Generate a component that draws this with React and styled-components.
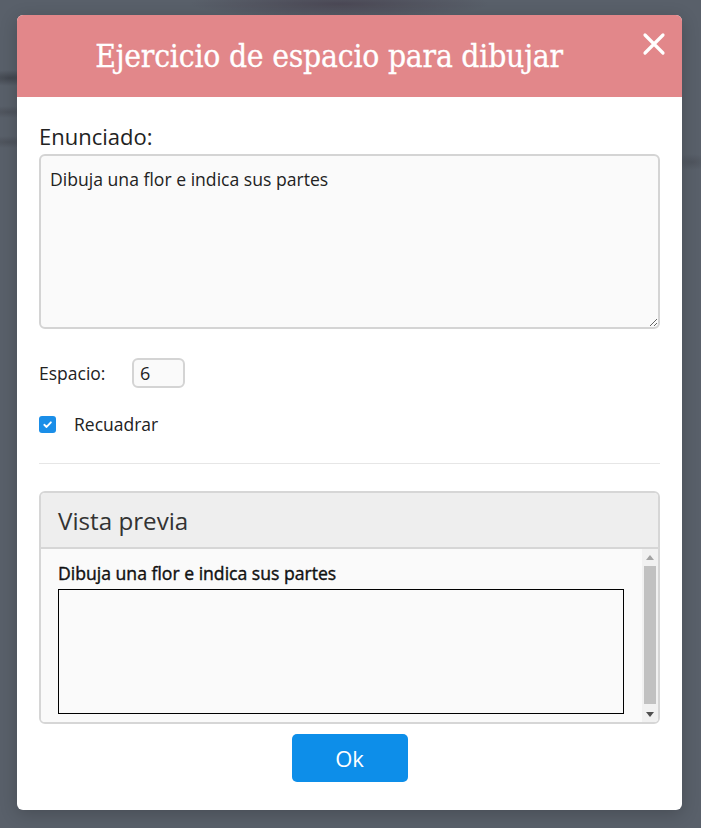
import React, { useState } from "react";
import styled, { createGlobalStyle } from "styled-components";

const GlobalStyle = createGlobalStyle`
  html, body {
    margin: 0;
    padding: 0;
  }
  body {
    font-family: "Open Sans", "Liberation Sans", sans-serif;
    background-color: #59606a;
    background-image:
      radial-gradient(ellipse 150px 14px at 340px 4px, rgba(70, 64, 78, 0.75), transparent),
      radial-gradient(ellipse 30px 8px at 10px 78px, rgba(60, 64, 72, 0.8), transparent),
      radial-gradient(ellipse 30px 6px at 8px 112px, rgba(70, 74, 82, 0.6), transparent),
      radial-gradient(ellipse 30px 6px at 8px 142px, rgba(70, 74, 82, 0.6), transparent),
      radial-gradient(ellipse 20px 8px at 692px 162px, rgba(70, 74, 82, 0.5), transparent);
    background-repeat: no-repeat;
    min-height: 828px;
  }
`;

const Page = styled.div`
  min-height: 828px;
  box-sizing: border-box;
  padding: 15px 0 0 17px;
`;

const Modal = styled.div`
  width: 665px;
  background: #fff;
  border-radius: 6px;
  overflow: hidden;
  box-shadow: 0 4px 18px rgba(0, 0, 0, 0.2);
`;

const Header = styled.div`
  position: relative;
  height: 82px;
  box-sizing: border-box;
  padding-right: 41px;
  background: #e2878a;
  display: flex;
  align-items: center;
  justify-content: center;
`;

const Title = styled.h2`
  margin: 0;
  color: #fff;
  font-family: "DejaVu Serif Condensed", "DejaVu Serif", serif;
  font-stretch: condensed;
  font-weight: normal;
  font-size: 31.5px;
  letter-spacing: -0.2px;
  -webkit-text-stroke: 0.3px #fff;
`;

const Close = styled.button`
  position: absolute;
  top: 17px;
  right: 16px;
  width: 24px;
  height: 24px;
  padding: 0;
  border: 0;
  background: none;
  cursor: pointer;
  display: flex;
`;

const Body = styled.div`
  padding: 24px 22px 28px;
  display: flex;
  flex-direction: column;
`;

const FieldLabel = styled.label`
  font-size: 22px;
  line-height: 30px;
  color: #222;
  margin-bottom: 3px;
`;

const TextArea = styled.textarea`
  box-sizing: border-box;
  width: 100%;
  height: 175px;
  border: 2px solid #d4d4d4;
  border-radius: 6px;
  background: #fafafa;
  padding: 12px 9px;
  font-family: inherit;
  font-size: 17.6px;
  line-height: 22px;
  color: #222;
  resize: vertical;
  outline: none;
`;

const Row = styled.div`
  display: flex;
  align-items: center;
  margin-top: ${(p) => p.$mt}px;
  gap: ${(p) => p.$gap || 0}px;
`;

const SmallLabel = styled.span`
  font-size: 17.5px;
  line-height: 22px;
  color: #222;
  width: ${(p) => (p.$w ? p.$w + "px" : "auto")};
`;

const NumberInput = styled.input`
  box-sizing: border-box;
  width: 53px;
  height: 30px;
  border: 2px solid #d4d4d4;
  border-radius: 6px;
  background: #fafafa;
  padding: 0 6px;
  font-family: inherit;
  font-size: 18px;
  color: #222;
  outline: none;
`;

const CheckBox = styled.span`
  width: 17px;
  height: 17px;
  border-radius: 3px;
  background: #1a8ee8;
  display: flex;
  align-items: center;
  justify-content: center;
`;

const Divider = styled.hr`
  border: 0;
  border-top: 1px solid #e6e6e6;
  margin: 28px 0 27px;
  width: 100%;
`;

const Panel = styled.div`
  border: 2px solid #d6d6d6;
  border-radius: 6px;
  overflow: hidden;
`;

const PanelHead = styled.div`
  height: 54px;
  background: #eeeeee;
  border-bottom: 2px solid #d6d6d6;
  display: flex;
  align-items: center;
  padding-left: 17px;
  font-size: 24.2px;
  color: #333;
`;

const PanelBody = styled.div`
  height: 173px;
  display: flex;
  overflow: hidden;
  background: #fafafa;
`;

const Preview = styled.div`
  flex: 1;
  padding: 13px 18px 21px 17px;
`;

const PreviewText = styled.div`
  font-size: 17.6px;
  line-height: 22px;
  color: #111;
  -webkit-text-stroke: 0.4px #111;
  margin-bottom: 5px;
`;

const DrawBox = styled.div`
  height: 125px;
  box-sizing: border-box;
  border: 1px solid #000;
`;

const ScrollBar = styled.div`
  width: 16px;
  display: flex;
  flex-direction: column;
  background: #f1f1f1;
`;

const ScrollArrow = styled.div`
  height: 16px;
  display: flex;
  align-items: center;
  justify-content: center;
`;

const ScrollThumb = styled.div`
  flex: 1;
  margin: 1px 2px 2px;
  background: #c1c1c1;
`;

const Footer = styled.div`
  display: flex;
  justify-content: center;
  margin-top: 10px;
`;

const OkButton = styled.button`
  width: 116px;
  height: 48px;
  border: 0;
  border-radius: 5px;
  background: #0d8ee9;
  color: #fff;
  font-family: inherit;
  font-size: 22px;
  cursor: pointer;
`;

export default function App() {
  const [text, setText] = useState("Dibuja una flor e indica sus partes");
  const [space, setSpace] = useState("6");

  return (
    <>
      <GlobalStyle />
      <Page>
        <Modal>
          <Header>
            <Title>Ejercicio de espacio para dibujar</Title>
            <Close aria-label="Cerrar">
              <svg width="24" height="24" viewBox="0 0 24 24">
                <path d="M3 3 L21 21 M21 3 L3 21" stroke="#fff" strokeWidth="3.2" strokeLinecap="round" />
              </svg>
            </Close>
          </Header>
          <Body>
            <FieldLabel>Enunciado:</FieldLabel>
            <TextArea value={text} onChange={(e) => setText(e.target.value)} />
            <Row $mt={29}>
              <SmallLabel $w={93}>Espacio:</SmallLabel>
              <NumberInput value={space} onChange={(e) => setSpace(e.target.value)} />
            </Row>
            <Row $mt={25} $gap={18}>
              <CheckBox>
                <svg width="11" height="11" viewBox="0 0 12 12">
                  <path d="M2.5 6.3 L5 8.7 L9.7 3.6" fill="none" stroke="#fff" strokeWidth="2" strokeLinecap="round" strokeLinejoin="round" />
                </svg>
              </CheckBox>
              <SmallLabel>Recuadrar</SmallLabel>
            </Row>
            <Divider />
            <Panel>
              <PanelHead>Vista previa</PanelHead>
              <PanelBody>
                <Preview>
                  <PreviewText>{text}</PreviewText>
                  <DrawBox />
                </Preview>
                <ScrollBar>
                  <ScrollArrow>
                    <svg width="8" height="5" viewBox="0 0 8 5">
                      <path d="M0 5 L4 0 L8 5 Z" fill="#a3a3a3" />
                    </svg>
                  </ScrollArrow>
                  <ScrollThumb />
                  <ScrollArrow>
                    <svg width="8" height="5" viewBox="0 0 8 5">
                      <path d="M0 0 L4 5 L8 0 Z" fill="#505050" />
                    </svg>
                  </ScrollArrow>
                </ScrollBar>
              </PanelBody>
            </Panel>
            <Footer>
              <OkButton>Ok</OkButton>
            </Footer>
          </Body>
        </Modal>
      </Page>
    </>
  );
}
